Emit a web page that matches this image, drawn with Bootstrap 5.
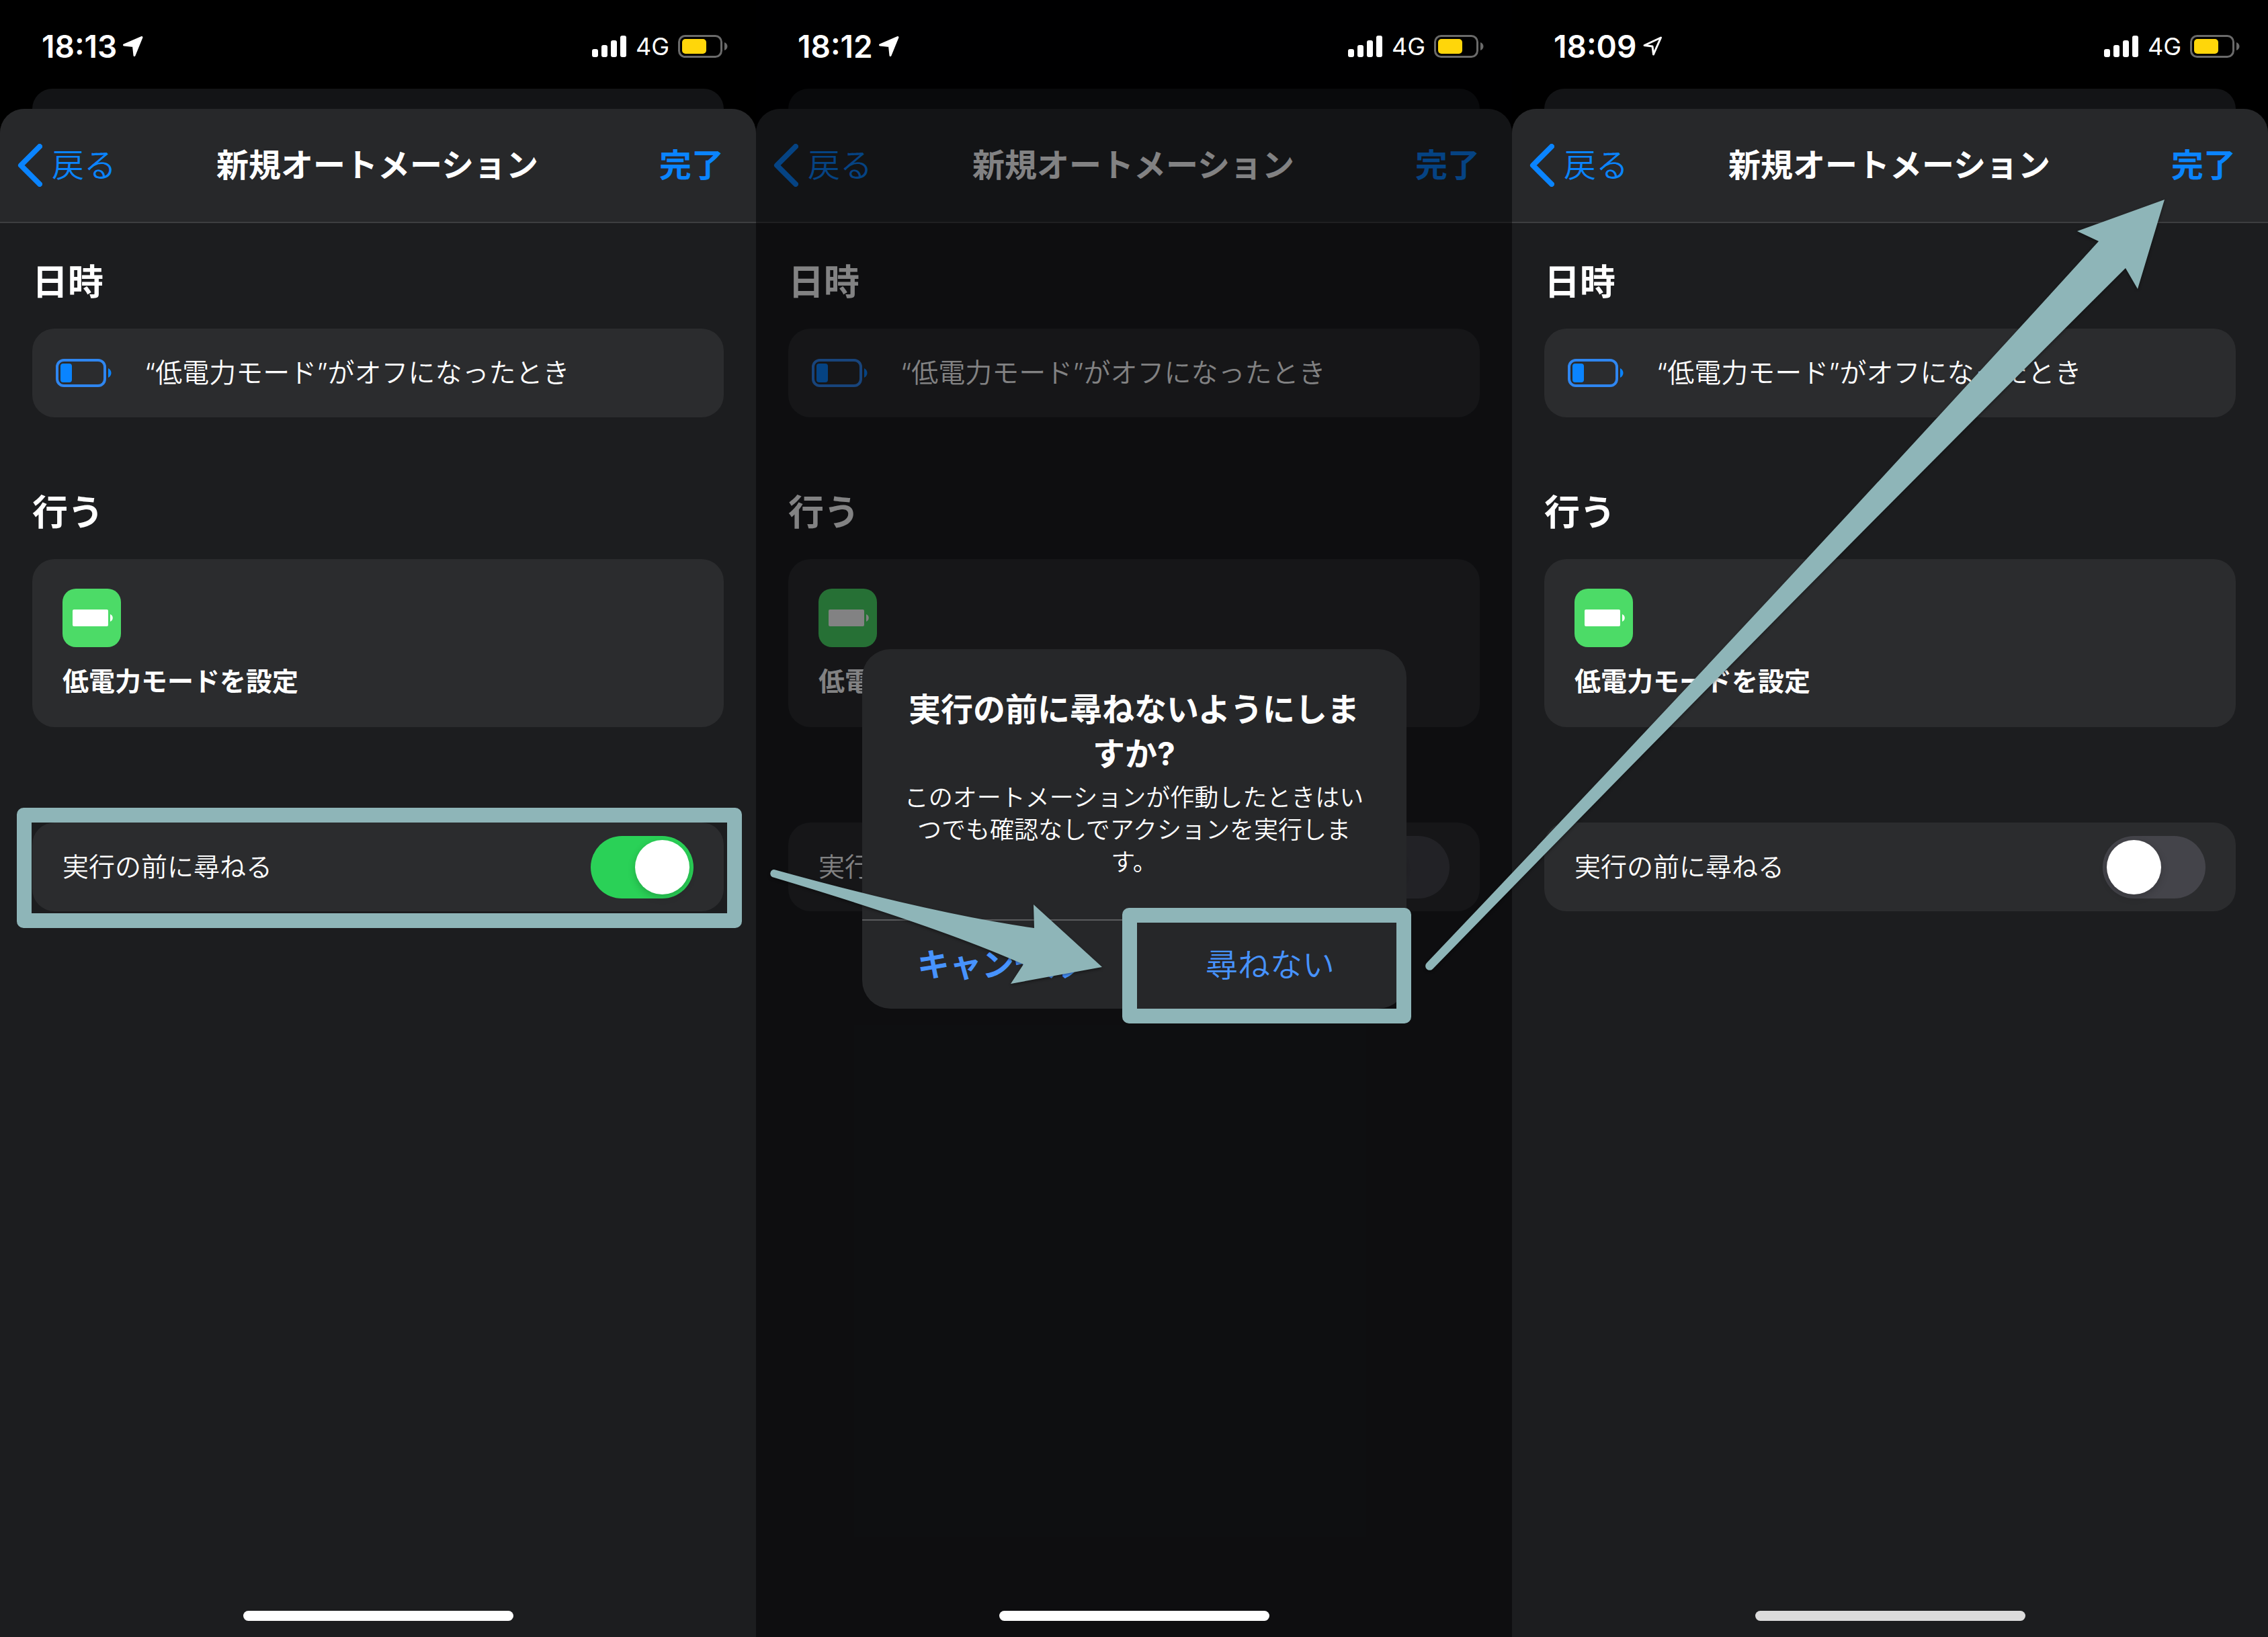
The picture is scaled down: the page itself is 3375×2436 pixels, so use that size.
<!DOCTYPE html>
<html lang="ja">
<head>
<meta charset="utf-8">
<meta name="viewport" content="width=device-width, initial-scale=1">
<title>新規オートメーション</title>
<link href="https://cdn.jsdelivr.net/npm/bootstrap@5.3.0/dist/css/bootstrap.min.css" rel="stylesheet">
<style>
  :root { --annot: #8eb5b8; --ios-blue: #0a84ff; }
  body { background: #000; color: #fff; font-family: Inter, "Noto Sans CJK JP", sans-serif; font-size: 39px; font-weight: 350; line-height: 60px; }
  svg { display: block; flex: none; }

  .phone { background: #000; min-height: 100vh; }
  .status { height: 132px; padding: 6px 42px 0 62px; z-index: 3; }
  .clock { font-size: 46px; font-weight: 600; line-height: 60px; }
  .carrier { font-size: 36px; font-weight: 400; line-height: 60px; margin: 0 13px; }
  .peek { height: 30px; margin: 0 48px; background: #131416; border-radius: 30px 30px 0 0; }
  .sheet { background: #1c1d1f; border-radius: 36px 36px 0 0; overflow: hidden; }
  .topbar { display: grid; grid-template-columns: 1fr auto 1fr; height: 170px; padding: 0 48px 0 26px; background: #27282a; border-bottom: 2px solid #3d3e40; font-size: 48px; }
  .topbar h1 { font-size: 48px; font-weight: 700; line-height: 60px; margin-left: 20px; }
  .topbar a { color: var(--ios-blue); text-decoration: none; gap: 14px; }
  .content { padding: 58px 48px 0; }
  .content h2 { font-size: 53px; font-weight: 700; line-height: 60px; margin: 0 0 39px; }
  .content section { margin-bottom: 112px; }
  .content section + section { margin-bottom: 142px; }
  .tile { background: #2b2c2e; border-radius: 33px; }
  .trigger { height: 132px; padding: 0 35px; gap: 48px; font-size: 40px; }
  .task { padding: 44px 45px 38px; gap: 21px; }
  .task span { font-weight: 700; }
  .ask { height: 132px; padding: 0 45px; }
  .toggle { appearance: none; display: flex; width: 153px; height: 93px; margin: 0; padding: 6px; border-radius: 47px; background: #44444a; }
  .toggle::before { content: ""; width: 81px; height: 81px; border-radius: 50%; background: #fff; box-shadow: 0 4px 12px #0003; }
  .toggle:checked { background: #2ad157; justify-content: flex-end; }
  .homebar { width: 402px; height: 15px; border-radius: 8px; background: #fff; bottom: 24px; z-index: 3; }
  .homebar.muted { background: #dcdcdc; }

  .shade { background: rgba(0, 1, 3, .49); padding-top: 31px; z-index: 2; }
  .dialog-box { width: 810px; background: #262729; border-radius: 42px; }
  .dialog-text { padding: 57px 48px 61px; }
  .dialog-text h3 { font-size: 48px; font-weight: 700; line-height: 66px; margin: 0 0 8px; }
  .dialog-text p { font-size: 36px; line-height: 48px; margin: 0; }
  .dialog-actions { border-top: 2px solid #5a5b5d; height: 133px; }
  .dialog-actions button { border: 0; background: none; color: #4793ff; font-size: 48px; font-weight: 350; padding: 0; }

  .ring { border: 22px solid var(--annot); border-radius: 10px; pointer-events: none; z-index: 4; }
  .ring-row { inset: -22px -27px -25px -23px; }
  .ring-button { inset: -19px -7px -22px -18px; }
  .arrows { z-index: 5; pointer-events: none; filter: drop-shadow(0 2px 2px rgba(0, 0, 0, .4)); }
</style>
<script src="https://cdn.jsdelivr.net/npm/bootstrap@5.3.0/dist/js/bootstrap.bundle.min.js"></script>
</head>
<body>
<svg width="0" height="0" class="position-absolute" aria-hidden="true">
  <symbol id="loc" viewBox="0 0 32 32"><path d="M29 2.500 18 29.500 16.500 15.500 2.500 14Z" fill="currentColor" stroke="currentColor" stroke-width="3" stroke-linejoin="round"/></symbol>
  <symbol id="loc-open" viewBox="0 0 32 32"><path d="M28.500 3 17.500 28 16 16 4 14.500Z" fill="none" stroke="currentColor" stroke-width="3" stroke-linejoin="round"/></symbol>
  <symbol id="signal" viewBox="0 0 52 32"><g fill="currentColor"><rect x="0" y="20" width="9" height="12" rx="3"/><rect x="14" y="14" width="9" height="18" rx="3"/><rect x="28" y="7" width="9" height="25" rx="3"/><rect x="42" y="0" width="9" height="32" rx="3"/></g></symbol>
  <symbol id="power" viewBox="0 0 74 34"><rect x="1.500" y="1.500" width="63" height="31" rx="9" fill="none" stroke="#6a6a6a" stroke-width="3"/><path d="M69 11c6 2 6 10 0 12Z" fill="#6a6a6a"/><rect x="6" y="6" width="36" height="22" rx="5" fill="#ffd60a"/></symbol>
  <symbol id="chevron" viewBox="0 0 37 64"><path d="M33 4 5 32 33 60" fill="none" stroke="currentColor" stroke-width="8" stroke-linecap="round" stroke-linejoin="round"/></symbol>
  <symbol id="low" viewBox="0 0 84 42"><rect x="2" y="2" width="71" height="38" rx="10" fill="none" stroke="#2f86f0" stroke-width="4"/><rect x="7" y="7" width="17" height="28" rx="4" fill="#0a84ff"/><path d="M78 14c6 3 6 11 0 14Z" fill="#0a84ff"/></symbol>
  <symbol id="app" viewBox="0 0 87 87"><rect width="87" height="87" rx="20" fill="#4cdb67"/><rect x="15" y="31" width="53" height="25" rx="2" fill="#fff"/><path d="M71 38c5 2 5 9 0 11Z" fill="#fff"/></symbol>
</svg>

<main class="d-flex position-relative">

  <div class="phone col d-flex flex-column position-relative">
    <div class="status d-flex align-items-center justify-content-between">
      <div class="d-flex align-items-center gap-2"><span class="clock">18:13</span><svg width="32" height="32"><use href="#loc"/></svg></div>
      <div class="d-flex align-items-center"><svg width="52" height="32"><use href="#signal"/></svg><span class="carrier">4G</span><svg width="74" height="34"><use href="#power"/></svg></div>
    </div>
    <div class="peek"></div>
    <div class="sheet flex-grow-1">
      <nav class="topbar align-items-center">
        <a href="#" class="d-flex align-items-center"><svg width="37" height="64"><use href="#chevron"/></svg>戻る</a>
        <h1 class="mb-0">新規オートメーション</h1>
        <a href="#" class="text-end fw-bold">完了</a>
      </nav>
      <div class="content">
        <section>
          <h2>日時</h2>
          <div class="tile trigger d-flex align-items-center"><svg width="84" height="42"><use href="#low"/></svg><span>“低電力モード”がオフになったとき</span></div>
        </section>
        <section>
          <h2>行う</h2>
          <div class="tile task d-flex flex-column"><svg width="87" height="87"><use href="#app"/></svg><span>低電力モードを設定</span></div>
        </section>
        <div class="tile ask d-flex align-items-center justify-content-between position-relative">
          <label for="ask1">実行の前に尋ねる</label>
          <input class="toggle" type="checkbox" role="switch" id="ask1" checked>
          <span class="ring ring-row position-absolute"></span>
        </div>
      </div>
    </div>
    <div class="homebar position-absolute start-50 translate-middle-x"></div>
  </div>

  <div class="phone col d-flex flex-column position-relative">
    <div class="status d-flex align-items-center justify-content-between position-relative">
      <div class="d-flex align-items-center gap-2"><span class="clock">18:12</span><svg width="32" height="32"><use href="#loc"/></svg></div>
      <div class="d-flex align-items-center"><svg width="52" height="32"><use href="#signal"/></svg><span class="carrier">4G</span><svg width="74" height="34"><use href="#power"/></svg></div>
    </div>
    <div class="peek"></div>
    <div class="sheet flex-grow-1">
      <nav class="topbar align-items-center">
        <a href="#" class="d-flex align-items-center"><svg width="37" height="64"><use href="#chevron"/></svg>戻る</a>
        <h1 class="mb-0">新規オートメーション</h1>
        <a href="#" class="text-end fw-bold">完了</a>
      </nav>
      <div class="content">
        <section>
          <h2>日時</h2>
          <div class="tile trigger d-flex align-items-center"><svg width="84" height="42"><use href="#low"/></svg><span>“低電力モード”がオフになったとき</span></div>
        </section>
        <section>
          <h2>行う</h2>
          <div class="tile task d-flex flex-column"><svg width="87" height="87"><use href="#app"/></svg><span>低電力モードを設定</span></div>
        </section>
        <div class="tile ask d-flex align-items-center justify-content-between">
          <label for="ask2">実行の前に尋ねる</label>
          <input class="toggle" type="checkbox" role="switch" id="ask2">
        </div>
      </div>
    </div>
    <div class="shade position-absolute top-0 start-0 w-100 h-100 d-flex align-items-center justify-content-center">
      <div class="dialog-box" role="alertdialog" aria-labelledby="dlgTitle" aria-describedby="dlgText">
        <div class="dialog-text text-center">
          <h3 id="dlgTitle">実行の前に尋ねないようにしま<br>すか?</h3>
          <p id="dlgText">このオートメーションが作動したときはい<br>つでも確認なしでアクションを実行しま<br>す。</p>
        </div>
        <div class="dialog-actions d-flex">
          <button type="button" class="col fw-bold">キャンセル</button>
          <button type="button" class="col position-relative">尋ねない<span class="ring ring-button position-absolute"></span></button>
        </div>
      </div>
    </div>
    <div class="homebar position-absolute start-50 translate-middle-x"></div>
  </div>

  <div class="phone col d-flex flex-column position-relative">
    <div class="status d-flex align-items-center justify-content-between">
      <div class="d-flex align-items-center gap-2"><span class="clock">18:09</span><svg width="32" height="32"><use href="#loc-open"/></svg></div>
      <div class="d-flex align-items-center"><svg width="52" height="32"><use href="#signal"/></svg><span class="carrier">4G</span><svg width="74" height="34"><use href="#power"/></svg></div>
    </div>
    <div class="peek"></div>
    <div class="sheet flex-grow-1">
      <nav class="topbar align-items-center">
        <a href="#" class="d-flex align-items-center"><svg width="37" height="64"><use href="#chevron"/></svg>戻る</a>
        <h1 class="mb-0">新規オートメーション</h1>
        <a href="#" class="text-end fw-bold">完了</a>
      </nav>
      <div class="content">
        <section>
          <h2>日時</h2>
          <div class="tile trigger d-flex align-items-center"><svg width="84" height="42"><use href="#low"/></svg><span>“低電力モード”がオフになったとき</span></div>
        </section>
        <section>
          <h2>行う</h2>
          <div class="tile task d-flex flex-column"><svg width="87" height="87"><use href="#app"/></svg><span>低電力モードを設定</span></div>
        </section>
        <div class="tile ask d-flex align-items-center justify-content-between">
          <label for="ask3">実行の前に尋ねる</label>
          <input class="toggle" type="checkbox" role="switch" id="ask3">
        </div>
      </div>
    </div>
    <div class="homebar muted position-absolute start-50 translate-middle-x"></div>
  </div>

  <svg class="arrows position-absolute top-0 start-0 w-100 h-100" viewBox="0 0 3375 2436" preserveAspectRatio="none" aria-hidden="true">
    <g fill="#8eb5b8">
      <path d="M1152 1294Q1390 1360 1539 1381L1538 1346 1640 1439 1504 1464 1523 1435Q1400 1380 1149 1305A6 6 0 0 1 1152 1294Z"/>
      <path d="M2123 1433Q2640 890 3123 359L3091 344 3221 297 3181 430 3163 399Q2650 910 2132 1442A6 6 0 0 1 2123 1433Z"/>
    </g>
  </svg>
</main>
</body>
</html>
